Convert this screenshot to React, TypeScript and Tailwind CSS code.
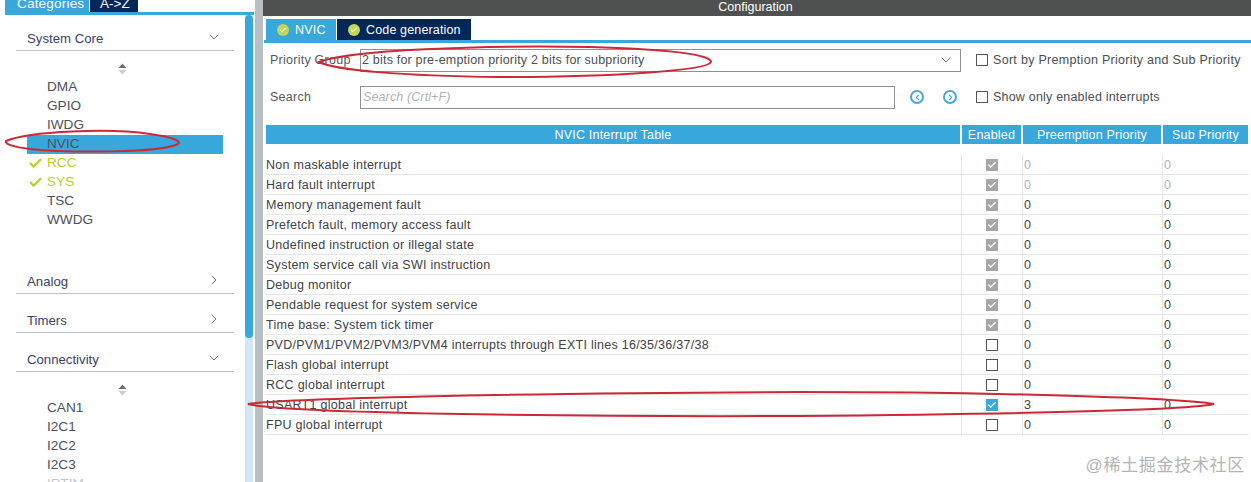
import { ChevronDown, ChevronRight, Check, ChevronLeft } from 'lucide-react';

const coreItems = [
  { name: 'DMA' },
  { name: 'GPIO' },
  { name: 'IWDG' },
  { name: 'NVIC', selected: true },
  { name: 'RCC', ok: true },
  { name: 'SYS', ok: true },
  { name: 'TSC' },
  { name: 'WWDG' },
];

const rows = [
  { name: 'Non maskable interrupt', state: 'locked', value: '0', dim: true },
  { name: 'Hard fault interrupt', state: 'locked', value: '0', dim: true },
  { name: 'Memory management fault', state: 'locked', value: '0' },
  { name: 'Prefetch fault, memory access fault', state: 'locked', value: '0' },
  { name: 'Undefined instruction or illegal state', state: 'locked', value: '0' },
  { name: 'System service call via SWI instruction', state: 'locked', value: '0' },
  { name: 'Debug monitor', state: 'locked', value: '0' },
  { name: 'Pendable request for system service', state: 'locked', value: '0' },
  { name: 'Time base: System tick timer', state: 'locked', value: '0' },
  { name: 'PVD/PVM1/PVM2/PVM3/PVM4 interrupts through EXTI lines 16/35/36/37/38', state: 'off', value: '0' },
  { name: 'Flash global interrupt', state: 'off', value: '0' },
  { name: 'RCC global interrupt', state: 'off', value: '0' },
  { name: 'USART1 global interrupt', state: 'on', value: '3' },
  { name: 'FPU global interrupt', state: 'off', value: '0' },
];

function SortArrows() {
  return (
    <div className="flex justify-center h-[19px] items-center pr-[4px]">
      <svg width="9" height="12" viewBox="0 0 9 12">
        <path d="M4.5 0.5 L8.5 5 H0.5 Z" fill="#6b7075" />
        <path d="M4.5 11.5 L8.5 7 H0.5 Z" fill="#c9cdd0" />
      </svg>
    </div>
  );
}

function SectionHead({ title, open }: { title: string; open?: boolean }) {
  return (
    <div className="mx-[11px] h-[24px] border-b border-[#bcc1c5] flex items-center justify-between pl-[11px] pr-[12px] w-[218px]">
      <span className="text-[13.2px] text-[#3a4266]">{title}</span>
      {open ? (
        <ChevronDown size={16} strokeWidth={1.1} className="text-[#444] mb-[3px]" />
      ) : (
        <ChevronRight size={16} strokeWidth={1.1} className="text-[#444] mb-[3px]" />
      )}
    </div>
  );
}

function SideItem({ name, selected, ok, faded }: { name: string; selected?: boolean; ok?: boolean; faded?: boolean }) {
  return (
    <div className={`h-[19px] w-[196px] ml-[22px] flex items-center relative pl-[20px] text-[13.6px] ${selected ? 'bg-[#38a7dc]' : ''} ${ok ? 'text-[#b7cf2d]' : faded ? 'text-[#c4c7ca]' : 'text-[#4d5058]'}`}>
      {ok && <Check size={15} strokeWidth={3.4} className="absolute left-[1px] text-[#b7cf2d]" />}
      {name}
    </div>
  );
}

function RowCheck({ state }: { state: string }) {
  if (state === 'off') {
    return <div className="w-[12px] h-[12px] border border-[#555] bg-white" />;
  }
  return (
    <div className={`w-[12px] h-[12px] flex items-center justify-center ${state === 'on' ? 'bg-[#3ba8dc]' : 'bg-[#a4a6a8]'}`}>
      <Check size={10} strokeWidth={3} className="text-white" />
    </div>
  );
}

function Circled({ left }: { left?: boolean }) {
  return (
    <div className="w-[14px] h-[14px] rounded-full border-2 border-[#4aa8d8] flex items-center justify-center">
      {left ? (
        <ChevronLeft size={9} strokeWidth={3} className="text-[#4aa8d8]" />
      ) : (
        <ChevronRight size={9} strokeWidth={3} className="text-[#4aa8d8]" />
      )}
    </div>
  );
}

function TabDot() {
  return (
    <span className="w-[12px] h-[12px] rounded-full bg-[#c3d65a] flex items-center justify-center">
      <Check size={8} strokeWidth={3} className="text-white" />
    </span>
  );
}

export default function App() {
  return (
    <div className="relative w-[1251px] h-[482px] overflow-hidden bg-white flex font-['Liberation_Sans',Arial,sans-serif]">
      {/* Left categories panel */}
      <div className="w-[255px] shrink-0 pl-[5px] h-full flex flex-col">
        <div className="h-[12px] flex overflow-hidden shrink-0">
          <div className="w-[84px] bg-[#38a7dc] text-white text-[13.5px] leading-[8px] pl-[12px] tracking-[0.2px]">Categories</div>
          <div className="w-[48px] ml-px bg-[#04275a] text-white text-[13.5px] leading-[8px] pl-[10px]">A-&gt;Z</div>
        </div>
        <div className="h-[3px] bg-[#38a7dc] w-[249px] shrink-0" />
        <div className="flex flex-1 min-h-0">
          <div className="w-[239px] pt-[12px] overflow-hidden">
            <SectionHead title="System Core" open />
            <div className="pt-[8px]">
              <SortArrows />
            </div>
            {coreItems.map((it) => (
              <SideItem key={it.name} {...it} />
            ))}
            <div className="h-[40px]" />
            <SectionHead title="Analog" />
            <div className="h-[15px]" />
            <SectionHead title="Timers" />
            <div className="h-[15px]" />
            <SectionHead title="Connectivity" open />
            <div className="pt-[8px]">
              <SortArrows />
            </div>
            {['CAN1', 'I2C1', 'I2C2', 'I2C3'].map((n) => (
              <SideItem key={n} name={n} />
            ))}
            <SideItem name="IRTIM" faded />
          </div>
          {/* scrollbar */}
          <div className="w-[8px] ml-[1px] bg-[#d3e6f5] h-full">
            <div className="h-[323px] bg-[#38a7dc] rounded-[4px]" />
          </div>
        </div>
      </div>

      {/* Splitter */}
      <div className="w-[8px] shrink-0 bg-[#b7bfc4] h-full" />

      {/* Configuration panel */}
      <div className="flex-1 min-w-0 flex flex-col">
        <div className="h-[16px] bg-[#4f5050] text-white text-[12.5px] leading-[14px] text-center pr-[3px]">Configuration</div>
        <div className="flex h-[21px] mt-[3px] pl-[3px]">
          <div className="w-[70px] bg-[#38a7dc] flex items-center pl-[11px] gap-[6px] text-white text-[12.5px] tracking-[0.2px]">
            <TabDot />
            <span className="pt-[1px]">NVIC</span>
          </div>
          <div className="w-[134px] ml-px bg-[#04275a] flex items-center pl-[11px] gap-[6px] text-white text-[12.5px] tracking-[0.15px]">
            <TabDot />
            <span className="pt-[1px]">Code generation</span>
          </div>
        </div>
        <div className="h-[3px] bg-[#38a7dc] ml-px" />

        {/* Priority group row */}
        <div className="flex items-center h-[22px] mt-[6px] pl-[7px] text-[12.5px] text-[#55585c] tracking-[0.25px]">
          <span className="w-[90px] pt-[1px]">Priority Group</span>
          <div className="w-[601px] h-[23px] border border-[#8e9092] flex items-center justify-between pl-[1px] pr-[6px] text-[#4c4f53] tracking-[0.2px]">
            <span className="pt-[1px]">2 bits for pre-emption priority 2 bits for subpriority</span>
            <ChevronDown size={16} strokeWidth={1.1} className="text-[#444]" />
          </div>
          <div className="w-[12px] h-[12px] border border-[#555] ml-[15px]" />
          <span className="ml-[5px] pt-[1px] text-[#4b4e52] tracking-[0.3px]">Sort by Premption Priority and Sub Priority</span>
        </div>

        {/* Search row */}
        <div className="flex items-center h-[22px] mt-[15px] pl-[7px] text-[12.5px] text-[#55585c] tracking-[0.25px]">
          <span className="w-[90px] pt-[1px]">Search</span>
          <div className="w-[535px] h-[23px] border border-[#8e9092] flex items-center pl-[2px] italic text-[#b0b3b6] tracking-[0.12px]">Search (Crtl+F)</div>
          <div className="ml-[15px]"><Circled left /></div>
          <div className="ml-[19px]"><Circled /></div>
          <div className="w-[12px] h-[12px] border border-[#555] ml-[19px]" />
          <span className="ml-[5px] pt-[1px] text-[#4b4e52] tracking-[0.2px]">Show only enabled interrupts</span>
        </div>

        {/* Interrupt table */}
        <div className="flex h-[19px] mt-[17px] ml-[3px] gap-[2px] text-white text-[12.5px] tracking-[0.2px] text-center leading-[20px]">
          <div className="w-[694px] bg-[#38a7dc]">NVIC Interrupt Table</div>
          <div className="w-[59px] bg-[#38a7dc]">Enabled</div>
          <div className="w-[138px] bg-[#38a7dc]">Preemption Priority</div>
          <div className="w-[85px] bg-[#38a7dc]">Sub Priority</div>
        </div>
        <div className="mt-[11px] ml-[3px] w-[983px]">
          {rows.map((r) => (
            <div key={r.name} className="flex h-[20px] border-b border-[#e3e5e7] items-center text-[12.5px] text-[#3f4246] tracking-[0.27px]">
              <div className="w-[695px] whitespace-nowrap pt-[1px]">{r.name}</div>
              <div className="w-[61px] h-full border-l border-[#e3e5e7] flex items-center justify-center pr-[1px]">
                <RowCheck state={r.state} />
              </div>
              <div className={`w-[140px] h-full border-l border-[#e3e5e7] pl-[1px] pt-[1px] flex items-center ${r.dim ? 'text-[#b0b3b6]' : ''}`}>{r.value}</div>
              <div className={`flex-1 h-full border-l border-[#e3e5e7] pl-[1px] pt-[1px] flex items-center ${r.dim ? 'text-[#b0b3b6]' : ''}`}>0</div>
            </div>
          ))}
        </div>
      </div>

      {/* Hand-drawn red annotations */}
      <svg className="absolute inset-0 pointer-events-none" width="1251" height="482" viewBox="0 0 1251 482" fill="none" stroke="#cc2936" strokeWidth="2">
        <path d="M6 141 C30 131 110 128 150 134 C172 137 182 141 178 144 C160 153 70 153 30 149 C14 147 4 144 6 141 Z" />
        <path d="M319 62 C350 50 480 45 590 47 C670 49 712 55 711 62 C708 70 620 77 500 77 C400 76 335 70 319 62 Z" />
        <path d="M248 404 C280 399 500 393 800 392 C1000 392 1180 398 1214 404 C1190 410 1000 414 800 416 C560 417 280 413 248 404 Z" />
      </svg>

      {/* Watermark */}
      <div className="absolute right-[6px] top-[456px] text-[17px] leading-[20px] text-[#b4b4b4] tracking-[0.7px] font-['Liberation_Sans','Noto_Sans_CJK_SC',sans-serif]">@稀土掘金技术社区</div>
    </div>
  );
}
